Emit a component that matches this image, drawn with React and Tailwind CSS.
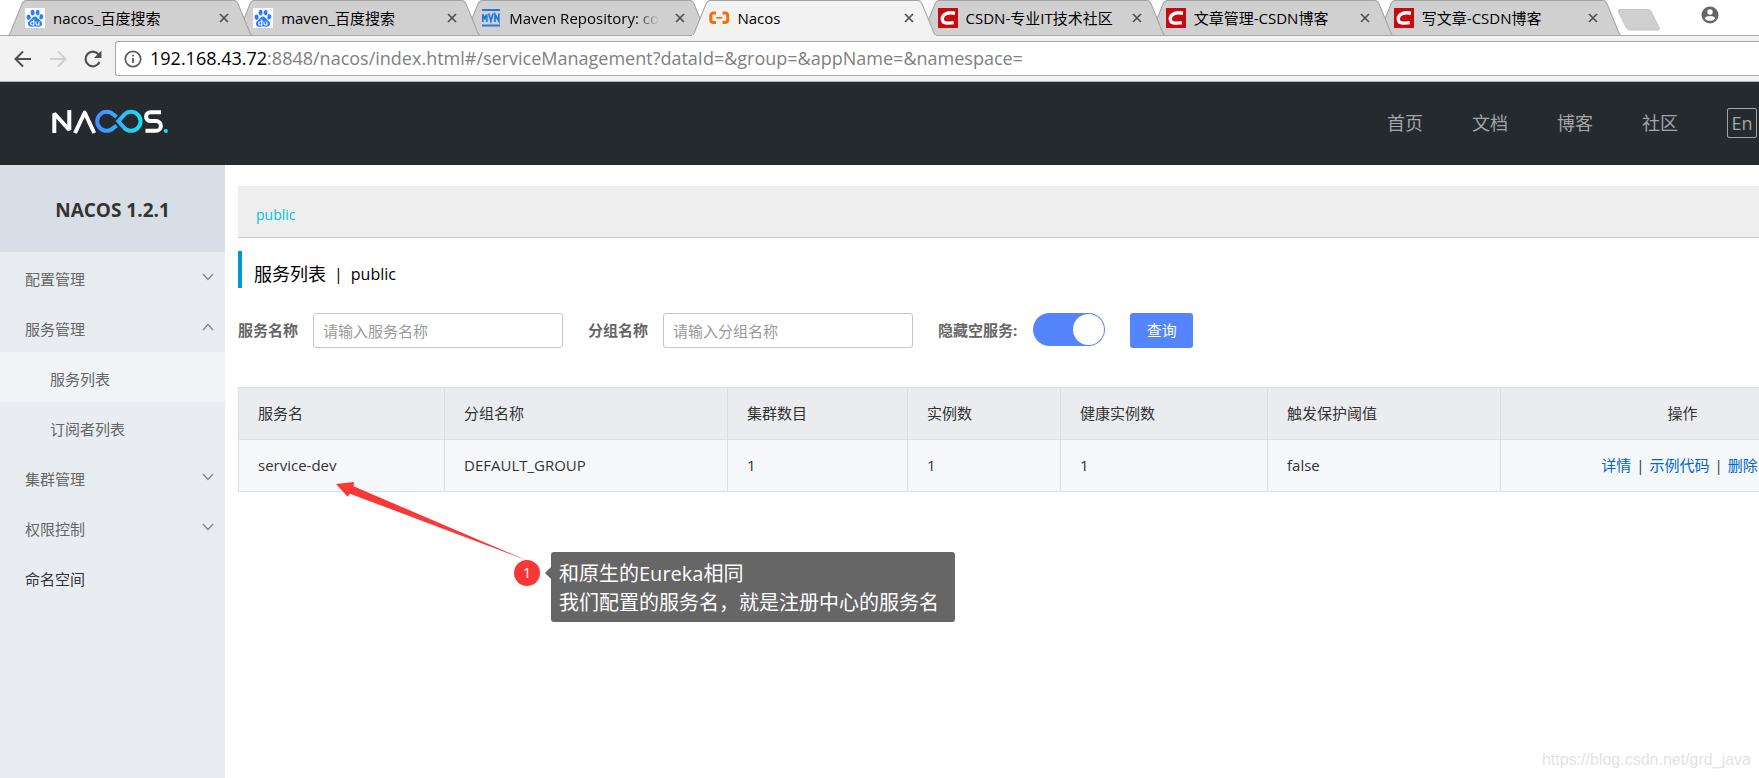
import React from "react";

const UI_FONT = "font-['Open_Sans','Noto_Sans_CJK_SC',sans-serif]";

function BaiduIcon() {
  return (
    <svg viewBox="0 0 20 20" className="size-5 shrink-0" aria-hidden="true">
      <rect width="20" height="20" fill="#fff" />
      <g fill="#2b7ffb">
        <ellipse cx="3.6" cy="9.2" rx="2.1" ry="2.7" transform="rotate(-8 3.6 9.2)" />
        <ellipse cx="7.6" cy="4.6" rx="2" ry="2.8" />
        <ellipse cx="12.6" cy="4.6" rx="2" ry="2.8" transform="rotate(8 12.6 4.6)" />
        <ellipse cx="16.3" cy="8.8" rx="2" ry="2.7" transform="rotate(8 16.3 8.8)" />
        <path d="M10 8.6c2 0 2.7 1.7 4 3 1.500 1.400 3.400 2.300 3 4.700-.4 2.300-2.600 2.700-4.400 2.400-1.800-.3-3.400-.3-5.200 0-1.800.3-4-.1-4.400-2.400-.4-2.400 1.500-3.300 3-4.700 1.300-1.300 2-3 4-3z" />
      </g>
      <g fill="none" stroke="#fff" strokeWidth="1.100">
        <path d="M8.800 11.500v5.500H7.300c-2.200 0-2.200-3.200 0-3.200h1.500M11 13.500v2.300c0 .9.400 1.200 1.200 1.200h1.700v-3.500" />
      </g>
    </svg>
  );
}

function MavenIcon() {
  return (
    <svg viewBox="0 0 20 20" className="size-5 shrink-0" aria-hidden="true">
      <rect x="1" y="1" width="18" height="2" fill="#1f7ae0" />
      <rect x="1" y="16.500" width="18" height="2" fill="#1f7ae0" />
      <g fill="none" stroke="#1f7ae0" strokeWidth="1.700">
        <path d="M1.800 14V6.500l2 4 2-4V14M7.700 5.500l2.200 7.500 2.200-7.500M14 14V6.500l3.800 6.500V5.500" />
      </g>
    </svg>
  );
}

function NacosIcon() {
  return (
    <svg viewBox="0 0 20 20" className="size-5 shrink-0" aria-hidden="true">
      <g fill="none" stroke="#ff6a00" strokeWidth="3">
        <path d="M7 5H4.300a2.500 2.500 0 0 0-2.500 2.500v4.500a2.500 2.500 0 0 0 2.500 2.500H7M13.500 5h2.700A2.500 2.500 0 0 1 18.700 7.500v4.500a2.500 2.500 0 0 1-2.500 2.500h-2.700" />
        <path d="M7.300 9.800h6" strokeWidth="1.700" />
      </g>
    </svg>
  );
}

function CsdnIcon() {
  return (
    <svg viewBox="0 0 20 20" className="size-5 shrink-0" aria-hidden="true">
      <rect width="20" height="20" fill="#c80a10" />
      <path d="M17 5.200C14 4.700 11 4.600 8.800 5.300C5.800 6.300 4.300 8.700 4.300 11C4.300 13.500 6 14.900 8.800 15.100C11 15.200 13.500 15.200 15.800 14.700" fill="none" stroke="#fff" strokeWidth="3.400" />
    </svg>
  );
}

function Cross() {
  return (
    <svg viewBox="0 0 10 10" className="size-[10px]" aria-hidden="true">
      <path d="M1 1l8 8M9 1L1 9" stroke="#4d4d4d" strokeWidth="1.600" fill="none" />
    </svg>
  );
}

const tabs = [
  { icon: BaiduIcon, title: "nacos_百度搜索", layer: "z-[6]" },
  { icon: BaiduIcon, title: "maven_百度搜索", layer: "z-[5]" },
  { icon: MavenIcon, title: "Maven Repository: co", layer: "z-[4]", fade: true },
  { icon: NacosIcon, title: "Nacos", layer: "z-10", active: true },
  { icon: CsdnIcon, title: "CSDN-专业IT技术社区", layer: "z-[3]" },
  { icon: CsdnIcon, title: "文章管理-CSDN博客", layer: "z-[2]" },
  { icon: CsdnIcon, title: "写文章-CSDN博客", layer: "z-[1]" },
];

function Tab({ icon: Icon, title, layer, active, fade }) {
  return (
    <div className={`relative -mr-4 flex h-9 min-w-0 flex-1 items-center pr-5 pl-[17px] ${layer}`}>
      <svg viewBox="0 0 244 36" preserveAspectRatio="none" className="absolute inset-0 size-full" aria-hidden="true">
        <path
          d="M0 35.500C2 35 2 33 3 31L14 4Q15.500.500 18 .500H226Q228.500.500 230 4L241 31C242 33 242 35 244 35.500"
          fill={active ? "#f2f2f2" : "#d0d0d0"}
          stroke="#a3a3a3"
        />
        {active ? <path d="M0 35.500H244" stroke="#f2f2f2" /> : <path d="M0 35.500H244" stroke="#a8a8a8" />}
      </svg>
      <a href="#tab" className="relative flex min-w-0 flex-1 items-center gap-2 text-[15px] leading-5 whitespace-nowrap text-black">
        <Icon />
        <span className={fade ? "[mask-image:linear-gradient(to_right,black_84%,transparent)]" : ""}>{title}</span>
      </a>
      <button type="button" aria-label="关闭标签页" className="relative p-[3px]">
        <Cross />
      </button>
    </div>
  );
}

function Browser() {
  return (
    <div className="shrink-0">
      <div className="relative flex h-9 overflow-hidden bg-white pl-2">
        <div className="absolute inset-x-0 bottom-0 h-px bg-[#a8a8a8]" />
        <div className="flex w-[1597px] shrink-0">
          {tabs.map((t) => (
            <Tab key={t.title} {...t} />
          ))}
        </div>
        <button type="button" aria-label="新标签页" className="ml-3 flex pt-2">
          <svg viewBox="0 0 44 24" className="h-6 w-11" aria-hidden="true">
            <path d="M3 1.500h28q2 0 3 2l8 16q1 2.500-1 2.500H13q-2.500 0-3.500-2L1.500 4q-1-2.500 1.500-2.500z" fill="#cfcfcf" stroke="#c3c3c3" />
          </svg>
        </button>
        <button type="button" aria-label="用户" className="ml-10 flex pt-[6px]">
          <svg viewBox="0 0 18 18" className="size-[18px]" aria-hidden="true">
            <circle cx="9" cy="9" r="8.500" fill="#666" />
            <circle cx="9" cy="6" r="2.700" fill="#fff" />
            <path d="M3.700 12.200c1.200-2.800 9.400-2.800 10.600 0-2.200 3.500-8.400 3.500-10.600 0z" fill="#fff" />
          </svg>
        </button>
      </div>
      <div className="flex h-[46px] items-center border-b border-[#b4b6b8] bg-[#f2f2f2] pl-3">
        <div className="flex items-center gap-[13px]">
          <button type="button" aria-label="后退">
            <svg viewBox="0 0 22 22" className="size-[22px]" aria-hidden="true">
              <path d="M19 11H4M11 3.500L3.500 11l7.500 7.500" fill="none" stroke="#505050" strokeWidth="2" />
            </svg>
          </button>
          <button type="button" aria-label="前进">
            <svg viewBox="0 0 22 22" className="size-[22px]" aria-hidden="true">
              <path d="M3 11h15M11 3.500l7.500 7.500-7.500 7.500" fill="none" stroke="#cfcfcf" strokeWidth="2" />
            </svg>
          </button>
          <button type="button" aria-label="重新加载">
            <svg viewBox="0 0 22 22" className="size-[22px]" aria-hidden="true">
              <path d="M17.500 14A7.300 7.300 0 1 1 16.600 6.500" fill="none" stroke="#505050" strokeWidth="2.200" />
              <path d="M19.500 2.500v7.500H12z" fill="#505050" />
            </svg>
          </button>
        </div>
        <div className="ml-[11px] flex h-[35px] flex-1 items-center rounded-l-[3px] border border-r-0 border-[#a8a8a8] bg-white pl-2">
          <svg viewBox="0 0 18 18" className="size-[18px] shrink-0" aria-hidden="true">
            <circle cx="9" cy="9" r="7.700" fill="none" stroke="#5a5a5a" strokeWidth="1.700" />
            <path d="M9 8v5M9 4.700v1.800" stroke="#5a5a5a" strokeWidth="1.800" />
          </svg>
          <span className="ml-2 pb-[2px] text-[18px] leading-6 whitespace-nowrap text-[#808080]">
            <span className="text-black">192.168.43.72</span>:8848/nacos/index.html#/serviceManagement?dataId=&amp;group=&amp;appName=&amp;namespace=
          </span>
        </div>
      </div>
    </div>
  );
}

function NacosLogo() {
  return (
    <svg viewBox="51 109 118 25" className="h-[25px] w-[118px]" role="img" aria-label="NACOS">
      <defs>
        <linearGradient id="loop" gradientUnits="userSpaceOnUse" x1="95" y1="0" x2="143" y2="0">
          <stop offset="0" stopColor="#4a86ff" />
          <stop offset="1" stopColor="#14e4f0" />
        </linearGradient>
      </defs>
      <g fill="none" stroke="#fff" strokeWidth="4">
        <path d="M54.300 133V113.500L69.300 130V110" strokeLinejoin="bevel" />
        <path d="M75 133L84.700 112.500L94.200 133" strokeLinejoin="round" />
        <path d="M161 112.200h-10.500a4.200 4.200 0 0 0 0 8.900h5.500a4.800 4.800 0 0 1 0 9.700h-10.500" />
      </g>
      <g fill="none" stroke="url(#loop)" strokeWidth="4">
        <path d="M116.500 117L113.400 114.600A9.500 9.500 0 1 0 113.400 128L116.500 125.600" />
        <path d="M124.300 114.600L118.300 121.300L124.300 128A9.500 9.500 0 1 0 124.300 114.600z" strokeLinejoin="miter" />
      </g>
      <circle cx="165.800" cy="131" r="2.100" fill="#14e4f0" />
    </svg>
  );
}

function Header() {
  return (
    <header className="flex h-[83px] shrink-0 items-center justify-between bg-[#252a2f] pr-[2px] pb-[2px] pl-[51px]">
      <a href="#home" className="-mt-[2px]">
        <NacosLogo />
      </a>
      <nav className="flex items-center gap-[49px] text-[18px] leading-6 text-[#a3a5a7]">
        {["首页", "文档", "博客", "社区"].map((t) => (
          <a key={t} href="#nav">{t}</a>
        ))}
        <button type="button" className="h-[30px] w-[30px] rounded-[2px] border border-[#a3a5a7] leading-6">
          En
        </button>
      </nav>
    </header>
  );
}

function Chevron({ up }) {
  return (
    <svg viewBox="0 0 12 8" className="-mt-1 h-2 w-3" aria-hidden="true">
      <path d={up ? "M1 7l5-5.500L11 7" : "M1 1l5 5.500L11 1"} fill="none" stroke="#808080" strokeWidth="1.200" />
    </svg>
  );
}

const menu = [
  { label: "配置管理", chevron: "down" },
  { label: "服务管理", chevron: "up" },
  { label: "服务列表", child: true, selected: true },
  { label: "订阅者列表", child: true },
  { label: "集群管理", chevron: "down" },
  { label: "权限控制", chevron: "down" },
  { label: "命名空间", dark: true },
];

function Sidebar() {
  return (
    <aside className="w-[225px] shrink-0 bg-[#e9edf2]">
      <h1 className="flex h-[87px] items-center justify-center bg-[#d9dde5] pt-[2px] text-[19px] leading-6 font-bold text-[#333]">NACOS 1.2.1</h1>
      <ul>
        {menu.map((m) => (
          <li key={m.label}>
            <a
              href="#menu"
              className={`flex h-[50px] items-center justify-between pt-1 pr-[11px] text-[15px] leading-5 ${m.child ? "pl-[50px]" : "pl-[25px]"} ${m.selected ? "bg-[#f1f3f7]" : ""} ${m.dark ? "text-[#333]" : "text-[#666]"}`}
            >
              {m.label}
              {m.chevron && <Chevron up={m.chevron === "up"} />}
            </a>
          </li>
        ))}
      </ul>
    </aside>
  );
}

const columns = [
  { name: "服务名", width: "w-[206px]", value: "service-dev" },
  { name: "分组名称", width: "w-[283px]", value: "DEFAULT_GROUP" },
  { name: "集群数目", width: "w-[180px]", value: "1" },
  { name: "实例数", width: "w-[153px]", value: "1" },
  { name: "健康实例数", width: "w-[207px]", value: "1" },
  { name: "触发保护阈值", width: "w-[233px]", value: "false" },
];

function Field({ id, label, hint }) {
  return (
    <div className="flex items-center gap-[15px]">
      <label htmlFor={id} className="text-[15px] font-bold text-[#666]">{label}</label>
      <input
        id={id}
        type="text"
        placeholder={hint}
        className="h-[35px] w-[250px] rounded-[3px] border border-[#c4c6cf] bg-white px-[9px] text-[15px] placeholder:text-[#999]"
      />
    </div>
  );
}

function Main() {
  return (
    <main className="min-w-0 flex-1 overflow-hidden pt-[21px] pl-[13px]">
      <div className="w-[1627px]">
        <div className="flex h-[52px] items-center border-b border-[#c8c8c8] bg-[#eee] pt-[6px] pl-[18px]">
          <a href="#public" className="text-[14px] leading-5 text-[#00c1de]">public</a>
        </div>
        <h2 className="mt-[13px] flex h-[37px] items-center gap-2 border-l-4 border-[#09c] pt-2 pl-3 text-[16px] leading-6 text-black">
          <span className="text-[18px]">服务列表</span>
          <span>|</span>
          <span>public</span>
        </h2>
        <form className="mt-[25px] flex items-center gap-[25px]" onSubmit={(e) => e.preventDefault()}>
          <Field id="service" label="服务名称" hint="请输入服务名称" />
          <Field id="group" label="分组名称" hint="请输入分组名称" />
          <div className="flex items-center gap-4">
            <label htmlFor="hide" className="text-[15px] font-bold text-[#666]">隐藏空服务:</label>
            <input
              id="hide"
              type="checkbox"
              role="switch"
              defaultChecked
              className="-mt-[2px] h-[33px] w-[72px] appearance-none rounded-full bg-[#5584ff] p-px before:block before:size-[31px] before:rounded-full before:bg-white before:content-[''] checked:before:ml-auto"
            />
          </div>
          <button type="submit" className="h-[35px] w-[63px] rounded-[3px] bg-[#5584ff] text-[15px] text-white">
            查询
          </button>
        </form>
        <table className="mt-[39px] w-full table-fixed border-collapse text-left text-[15px] leading-5 text-[#333]">
          <thead>
            <tr className="h-[52px] bg-[#ebecf0]">
              {columns.map((c) => (
                <th key={c.name} className={`border border-[#dcdee3] px-[19px] pb-[2px] font-normal ${c.width}`}>{c.name}</th>
              ))}
              <th className="border border-[#dcdee3] pb-[2px] text-center font-normal">操作</th>
            </tr>
          </thead>
          <tbody>
            <tr className="h-[52px] bg-[#f5f7f9]">
              {columns.map((c) => (
                <td key={c.name} className="border border-[#dcdee3] px-[19px] pb-[2px]">{c.value}</td>
              ))}
              <td className="border border-[#dcdee3] pr-[6px] pb-[2px]">
                <span className="flex justify-center gap-[5px]">
                  <a href="#detail" className="text-[#06c]">详情</a>
                  <span>|</span>
                  <a href="#code" className="text-[#06c]">示例代码</a>
                  <span>|</span>
                  <a href="#delete" className="text-[#06c]">删除</a>
                </span>
              </td>
            </tr>
          </tbody>
        </table>
      </div>
    </main>
  );
}

function Annotation() {
  return (
    <div className="pointer-events-none absolute top-[480px] left-[334px] z-20">
      <svg viewBox="334 480 210 84" className="h-[84px] w-[210px]" aria-hidden="true">
        <path d="M336 484L354 482L353.500 486.300L527 560.500L350 493.700L347.700 496.700z" fill="#fa3737" />
      </svg>
      <div className="absolute top-20 left-[180px] flex items-start">
        <span className="flex size-[26px] items-center justify-center rounded-full bg-[#fa3737] pb-[2px] text-[15px] leading-5 text-white">1</span>
        <svg viewBox="0 0 6 12" className="mt-[7px] ml-[5px] h-3 w-[6px]" aria-hidden="true">
          <path d="M6 0v12L0 6z" fill="#666" />
        </svg>
        <p className="-mt-2 h-[70px] w-[404px] rounded-[3px] bg-[#666] px-2 pt-[7px] text-[20px] leading-[29px] whitespace-nowrap text-white">
          和原生的Eureka相同
          <br />
          我们配置的服务名，就是注册中心的服务名
        </p>
      </div>
    </div>
  );
}

export default function App() {
  return (
    <div className={`relative flex min-h-screen flex-col overflow-hidden bg-white ${UI_FONT}`}>
      <Browser />
      <Header />
      <div className="flex flex-1">
        <Sidebar />
        <Main />
      </div>
      <Annotation />
      <p className="pointer-events-none absolute right-2 bottom-2 font-['Liberation_Sans',sans-serif] text-[16px] leading-5 text-[#e3e3e3]">
        https://blog.csdn.net/grd_java
      </p>
    </div>
  );
}
